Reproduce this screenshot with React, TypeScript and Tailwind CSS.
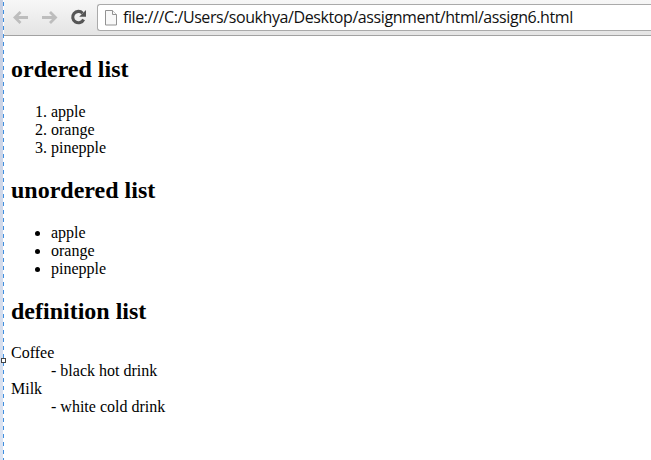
const strip = "w-[3px] shrink-0 bg-linear-to-b from-[#c5cee2] to-[#dce4f2]";

function Toolbar() {
  return (
    <div className="flex h-9 items-start border-b border-[#a2a2a2] bg-linear-to-b from-[#f7f7f7] to-[#e4e4e4]">
      <svg width="93" height="35" viewBox="4 0 93 35" className="shrink-0" fill="none">
        <path d="M28 17.5H15M20.5 12L15 17.5L20.5 23" stroke="#bdbdbd" strokeWidth="2.8" />
        <path d="M42 17.5H55M50 12L55.5 17.5L50 23" stroke="#bdbdbd" strokeWidth="2.8" />
        <path d="M82.6 13.2A5.7 5.7 0 1 0 83.6 19.5" stroke="#555" strokeWidth="3.1" />
        <path d="M86 10V16.8H79.2Z" fill="#555" />
      </svg>
      <div className="mt-1 flex h-[27px] flex-1 items-center rounded-l-[3px] border border-r-0 border-[#aaa] bg-white pl-[7px]">
        <svg width="12" height="16" viewBox="0 0 12 16" className="shrink-0" fill="#f8f8f8" stroke="#929292">
          <path d="M.5 .5H7.5L11.5 4.5V15H.5Z" />
          <path d="M7.5 .5V4.5H11.5" />
        </svg>
        <span className="ml-1.5 whitespace-nowrap pb-0.5 font-['Open_Sans',sans-serif] text-[16px] leading-6 tracking-[-0.41px] text-[#111]">
          file:///C:/Users/soukhya/Desktop/assignment/html/assign6.html
        </span>
      </div>
    </div>
  );
}

export default function App() {
  return (
    <div className="relative flex h-[460px] w-[651px] overflow-hidden bg-white">
      <div className={strip} />
      <div className="w-px shrink-0 bg-[repeating-linear-gradient(to_bottom,#fff_0px_2px,#3f8fe0_2px_6px,#fff_6px_8px)]" />
      <div className="min-w-0 flex-1">
        <Toolbar />
        <main className="pl-[7px] pt-[20px] font-['Liberation_Serif',serif] text-[16px] leading-[18px] text-black">
          <h2 className="text-[24px] font-bold leading-[27px]">ordered list</h2>
          <ol className="mt-5 list-decimal pl-10">
            <li>apple</li>
            <li>orange</li>
            <li>pinepple</li>
          </ol>
          <h2 className="mt-5 text-[24px] font-bold leading-[27px]">unordered list</h2>
          <ul className="mt-5 list-disc pl-10">
            <li>apple</li>
            <li>orange</li>
            <li>pinepple</li>
          </ul>
          <h2 className="mt-5 text-[24px] font-bold leading-[27px]">definition list</h2>
          <dl className="mt-[19px]">
            <dt>Coffee</dt>
            <dd className="pl-10">- black hot drink</dd>
            <dt>Milk</dt>
            <dd className="pl-10">- white cold drink</dd>
          </dl>
        </main>
      </div>
      <div className="absolute left-px top-[358px] size-[5px] border border-[#444] bg-white" />
    </div>
  );
}
